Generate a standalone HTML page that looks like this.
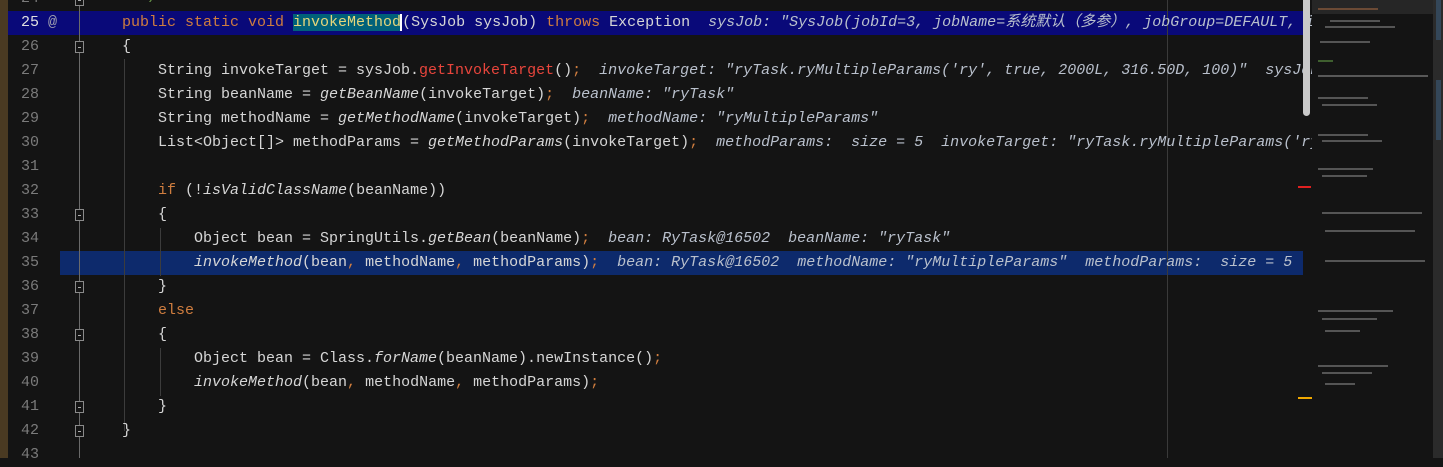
<!DOCTYPE html>
<html><head><meta charset="utf-8"><style>
*{margin:0;padding:0;box-sizing:border-box}
body{width:1443px;height:458px;background:#141414;overflow:hidden;position:relative;font-family:"Liberation Mono","Noto Sans CJK SC",monospace;font-size:15px}
.strip{position:absolute;left:0;top:0;width:8px;height:458px;background:#4a3a22}
.hl25{position:absolute;left:8px;top:11px;width:1295px;height:24px;background:#090979}
.hl35{position:absolute;left:60px;top:251px;width:1243px;height:24px;background:#0d2a6c}
.num{position:absolute;left:8px;width:31px;text-align:right;color:#7b7b7b;line-height:24px;height:24px}
.code{position:absolute;left:0;width:1312px;overflow:hidden;white-space:pre;line-height:24px;height:24px;color:#d6d6d6}
.k{color:#cf7d3f}.o{color:#cf7d3f}.r{color:#e8453c}.i{font-style:italic}.d{font-style:italic;color:#b9c0cc}.g{color:#6a9a4a}
.vl{position:absolute;width:1px;background:#5a5a5a}
.fold{position:absolute;left:75px;width:9px;height:12px;border:1px solid #8a8a8a;background:#141414}
.fold:after{content:"";position:absolute;left:2px;top:5px;width:3px;height:1px;background:#aaa}
.mm{position:absolute;height:2px}
</style></head><body>
<div class="strip"></div>
<div class="hl25"></div>
<div class="hl35"></div>
<div class="vl" style="left:79px;top:0;height:458px;background:#6a6a6a"></div>
<div class="vl" style="left:124px;top:59px;height:372px;background:#3c3c3c"></div>
<div class="vl" style="left:160px;top:252px;height:24px;background:#3c3c3c"></div>
<div class="vl" style="left:160px;top:348px;height:48px;background:#3c3c3c"></div>
<div class="vl" style="left:160px;top:228px;height:48px;background:#3c3c3c"></div>
<div class="vl" style="left:1167px;top:0;height:458px;background:#3a3a3a"></div>
<div class="fold" style="top:-6px"></div>
<div class="fold" style="top:41px"></div>
<div class="fold" style="top:209px"></div>
<div class="fold" style="top:281px"></div>
<div class="fold" style="top:329px"></div>
<div class="fold" style="top:401px"></div>
<div class="fold" style="top:425px"></div>

<div class="num" style="top:-13px">24</div>
<div class="num" style="top:11px;color:#e0e0e0">25</div>
<div style="position:absolute;left:48px;top:11px;line-height:24px;color:#a0a0b0">@</div>
<div class="num" style="top:35px">26</div><div class="num" style="top:59px">27</div><div class="num" style="top:83px">28</div><div class="num" style="top:107px">29</div><div class="num" style="top:131px">30</div><div class="num" style="top:155px">31</div><div class="num" style="top:179px">32</div><div class="num" style="top:203px">33</div><div class="num" style="top:227px">34</div><div class="num" style="top:251px">35</div><div class="num" style="top:275px">36</div><div class="num" style="top:299px">37</div><div class="num" style="top:323px">38</div><div class="num" style="top:347px">39</div><div class="num" style="top:371px">40</div><div class="num" style="top:395px">41</div><div class="num" style="top:419px">42</div><div class="num" style="top:443px">43</div>

<div class="code" style="top:-13px;padding-left:122px"><span class="g i">  */</span></div>
<div class="code" style="top:11px;padding-left:122px"><span class="k">public static void </span><span style="background:#00617a;color:#e6d67a">invokeMethod</span><span style="border-left:2px solid #fff;margin-left:-1px"></span>(SysJob sysJob) <span class="k">throws </span>Exception  <span class="d">sysJob: "SysJob(jobId=3, jobName=系统默认（多参）, jobGroup=DEFAULT, i</span></div>
<div class="code" style="top:35px;padding-left:122px">{</div>
<div class="code" style="top:59px;padding-left:158px">String invokeTarget = sysJob.<span class="r">getInvokeTarget</span>()<span class="o">;</span>  <span class="d">invokeTarget: "ryTask.ryMultipleParams('ry', true, 2000L, 316.50D, 100)"  sysJob: </span></div>
<div class="code" style="top:83px;padding-left:158px">String beanName = <span class="i">getBeanName</span>(invokeTarget)<span class="o">;</span>  <span class="d">beanName: "ryTask"</span></div>
<div class="code" style="top:107px;padding-left:158px">String methodName = <span class="i">getMethodName</span>(invokeTarget)<span class="o">;</span>  <span class="d">methodName: "ryMultipleParams"</span></div>
<div class="code" style="top:131px;padding-left:158px">List&lt;Object[]&gt; methodParams = <span class="i">getMethodParams</span>(invokeTarget)<span class="o">;</span>  <span class="d">methodParams:  size = 5  invokeTarget: "ryTask.ryMultipleParams('ry</span></div>
<div class="code" style="top:179px;padding-left:158px"><span class="k">if </span>(!<span class="i">isValidClassName</span>(beanName))</div>
<div class="code" style="top:203px;padding-left:158px">{</div>
<div class="code" style="top:227px;padding-left:194px">Object bean = SpringUtils.<span class="i">getBean</span>(beanName)<span class="o">;</span>  <span class="d">bean: RyTask@16502  beanName: "ryTask"</span></div>
<div class="code" style="top:251px;padding-left:194px"><span class="i">invokeMethod</span>(bean<span class="o">,</span> methodName<span class="o">,</span> methodParams)<span class="o">;</span>  <span class="d">bean: RyTask@16502  methodName: "ryMultipleParams"  methodParams:  size = 5</span></div>
<div class="code" style="top:275px;padding-left:158px">}</div>
<div class="code" style="top:299px;padding-left:158px"><span class="k">else</span></div>
<div class="code" style="top:323px;padding-left:158px">{</div>
<div class="code" style="top:347px;padding-left:194px">Object bean = Class.<span class="i">forName</span>(beanName).newInstance()<span class="o">;</span></div>
<div class="code" style="top:371px;padding-left:194px"><span class="i">invokeMethod</span>(bean<span class="o">,</span> methodName<span class="o">,</span> methodParams)<span class="o">;</span></div>
<div class="code" style="top:395px;padding-left:158px">}</div>
<div class="code" style="top:419px;padding-left:122px">}</div>

<div style="position:absolute;left:1303px;top:0;width:7px;height:116px;background:#c9c9c9;border-radius:0 0 4px 4px"></div>
<div style="position:absolute;left:1298px;top:186px;width:13px;height:2px;background:#e02020"></div>
<div style="position:absolute;left:1298px;top:397px;width:14px;height:2px;background:#f0a800"></div>
<div style="position:absolute;left:1312px;top:0;width:121px;height:14px;background:#262626"></div>
<div class="mm" style="left:1318px;top:8px;width:60px;background:#6b4a35"></div>
<div class="mm" style="left:1330px;top:20px;width:50px;background:#555"></div>
<div class="mm" style="left:1325px;top:26px;width:70px;background:#555"></div>
<div class="mm" style="left:1320px;top:41px;width:50px;background:#555"></div>
<div class="mm" style="left:1318px;top:60px;width:15px;background:#3f5f2f"></div>
<div class="mm" style="left:1318px;top:75px;width:110px;background:#585858"></div>
<div class="mm" style="left:1318px;top:97px;width:50px;background:#555"></div>
<div class="mm" style="left:1322px;top:104px;width:55px;background:#555"></div>
<div class="mm" style="left:1318px;top:134px;width:50px;background:#555"></div>
<div class="mm" style="left:1322px;top:140px;width:60px;background:#555"></div>
<div class="mm" style="left:1318px;top:168px;width:55px;background:#555"></div>
<div class="mm" style="left:1322px;top:175px;width:45px;background:#555"></div>
<div class="mm" style="left:1322px;top:212px;width:100px;background:#555"></div>
<div class="mm" style="left:1325px;top:230px;width:90px;background:#555"></div>
<div class="mm" style="left:1325px;top:260px;width:100px;background:#555"></div>
<div class="mm" style="left:1318px;top:310px;width:75px;background:#555"></div>
<div class="mm" style="left:1322px;top:318px;width:55px;background:#555"></div>
<div class="mm" style="left:1325px;top:330px;width:35px;background:#555"></div>
<div class="mm" style="left:1318px;top:365px;width:70px;background:#555"></div>
<div class="mm" style="left:1322px;top:372px;width:50px;background:#555"></div>
<div class="mm" style="left:1325px;top:383px;width:30px;background:#555"></div>
<div style="position:absolute;left:1433px;top:0;width:10px;height:458px;background:#2b2b2b"></div>
<div style="position:absolute;left:1436px;top:0;width:5px;height:40px;background:#3b5a78;opacity:.6"></div>
<div style="position:absolute;left:1436px;top:80px;width:5px;height:60px;background:#3b5a78;opacity:.6"></div>
</body></html>
